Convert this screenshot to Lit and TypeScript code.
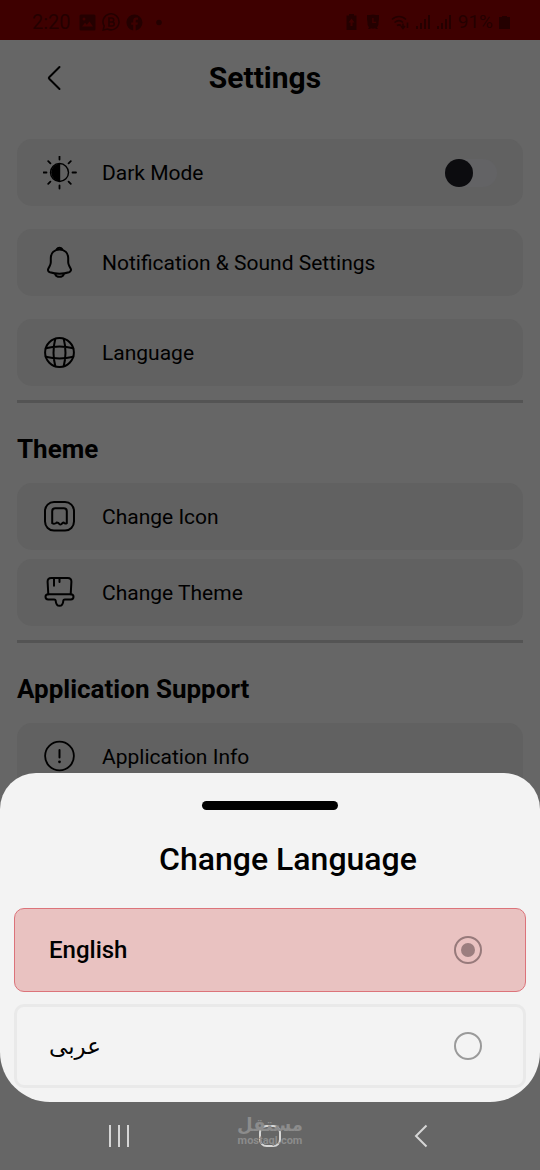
import { LitElement, html, css, svg, TemplateResult } from "lit";
import { customElement, state } from "lit/decorators.js";

type Language = { id: string; label: string };

const LANGUAGES: Language[] = [
  { id: "en", label: "English" },
  { id: "ar", label: "عربى" },
];

const icons: Record<string, TemplateResult> = {
  brightness: svg`
    <circle cx="16.500" cy="16.500" r="9" stroke-width="1.400"/>
    <path d="M17.200 7.500a9 9 0 1 0 0 18z" fill="currentColor" stroke="none"/>
    <path d="M16.500.5v3M16.500 29.500v3M.5 16.500h3M29.500 16.500h3.500M5.200 5.200l2.200 2.200M25.600 25.600l2.200 2.200M27.800 5.200l-2.200 2.200M7.400 25.600l-2.200 2.200" stroke-width="1.800"/>`,
  bell: svg`
    <path d="M16.500 3.400c-5.300 0-8.700 3.700-8.700 8.700v4.100c0 1.500-.5 2.700-1.200 4l-1.200 2.200c-.9 1.700-.2 3.300 1.600 3.900 6.200 1.900 12.800 1.900 19 0 1.800-.6 2.500-2.300 1.600-3.900l-1.200-2.200c-.7-1.300-1.200-2.500-1.200-4v-4.100c0-5-3.400-8.700-8.700-8.700z"/>
    <path d="M13.900 3c.5-.9 1.500-1.300 2.600-1.300s2.100.4 2.600 1.300M12.300 28.300c.6 1.600 2.200 2.500 4.200 2.500s3.600-.9 4.200-2.500"/>`,
  globe: svg`
    <circle cx="16.500" cy="16.500" r="14.400"/>
    <path d="M12.300 2.700c-2.300 9-2.300 18.600 0 27.600M20.700 2.700c2.300 9 2.300 18.600 0 27.600M2.700 12.300c9-2.300 18.600-2.300 27.600 0M2.700 20.700c9 2.300 18.600 2.300 27.600 0"/>`,
  appIcon: svg`
    <rect x="2" y="2" width="29" height="28.600" rx="9"/>
    <path d="M9.200 11.200c0-1.900 1.100-3 3-3h8.600c1.900 0 3 1.100 3 3v12c-1 .7-2.300.5-3-.7-1.200.1-1.600.5-1.900 1.300-.6.900-2 .9-2.700 0-.6-1-1.200-1.400-2.600-1.300-.8 1.200-2.900 1.600-4.400.7z"/>`,
  brush: svg`
    <path d="M5.300 18.200 4.600 5.800C4.500 3.300 5.800 2 8.200 2h16.600c2.400 0 3.700 1.300 3.600 3.800l-.7 12.400"/>
    <path d="M5.200 18.200h22.600c1.700 0 2.700 1.100 2.700 2.500s-1 2.700-2.700 2.700h-6c-.9 0-1.400.4-1.500 1.300-.2 3.400-1.500 5.100-3.800 5.100s-3.600-1.700-3.800-5.100c-.1-.9-.6-1.300-1.500-1.300h-6c-1.700 0-2.700-1.200-2.700-2.700s1-2.500 2.700-2.500z"/>
    <path d="M11 2.200v7.600M16.500 2.200v3.800"/>`,
  info: svg`
    <circle cx="16.500" cy="16" r="14.400" stroke-width="1.800"/>
    <path d="M16.500 10v7.500" stroke-width="2"/>
    <circle cx="16.500" cy="21.800" r="1.400" fill="currentColor" stroke="none"/>`,
};

@customElement("app-root")
export class AppRoot extends LitElement {
  static styles = css`
    :host {
      display: block;
      font-family: Roboto, "Noto Sans", sans-serif;
      color: #000;
    }
    * {
      box-sizing: border-box;
    }
    h1, h2, p {
      margin: 0;
    }
    button {
      font: inherit;
      color: inherit;
      border: 0;
      padding: 0;
      background: none;
      cursor: pointer;
    }
    .device {
      position: relative;
      display: flex;
      flex-direction: column;
      height: 100vh;
      overflow: hidden;
      background: #666;
    }
    .status {
      display: flex;
      justify-content: space-between;
      align-items: center;
      height: 40px;
      padding: 4px 30px 0 32px;
      background: #3e0000;
      color: #240000;
      font-size: 19px;
      line-height: 24px;
    }
    .status-group {
      display: flex;
      align-items: center;
      gap: 6px;
    }
    .clock {
      font-size: 20px;
      margin-right: 2px;
    }
    .status svg {
      display: block;
    }
    .page {
      position: relative;
      flex: 1;
      min-height: 0;
      overflow: hidden;
    }
    .header {
      display: grid;
      grid-template-columns: 40px 1fr 40px;
      align-items: center;
      height: 76px;
      padding: 0 34px;
    }
    .back {
      display: grid;
      place-items: center;
      height: 40px;
    }
    .title {
      text-align: center;
      font-size: 30px;
      line-height: 36px;
      font-weight: 700;
      padding-right: 10px;
    }
    .content {
      padding: 23px 17px 0;
    }
    .cards {
      display: flex;
      flex-direction: column;
      gap: 9px;
    }
    .cards.loose {
      gap: 23px;
    }
    .card {
      display: flex;
      align-items: center;
      gap: 25px;
      width: 100%;
      height: 67px;
      padding: 0 26px;
      border-radius: 15px;
      background: #616161;
      font-size: 21px;
      line-height: 28px;
      text-align: left;
    }
    .icon {
      flex: none;
      width: 34px;
      height: 34px;
      fill: none;
      stroke: currentColor;
      stroke-width: 2;
      stroke-linecap: round;
      stroke-linejoin: round;
    }
    .card-label {
      flex: 1;
    }
    .switch {
      appearance: none;
      margin: 0;
      width: 52px;
      height: 28px;
      border-radius: 14px;
      background: #636365;
      display: flex;
    }
    .switch::before {
      content: "";
      width: 28px;
      height: 28px;
      border-radius: 50%;
      background: #0c0c0f;
    }
    .switch:checked {
      justify-content: flex-end;
    }
    .divider {
      height: 3px;
      margin: 14px 0 28px;
      border: 0;
      background: #545454;
    }
    .section {
      font-size: 26px;
      line-height: 36px;
      font-weight: 700;
      margin-bottom: 16px;
    }
    .sheet {
      position: absolute;
      left: 0;
      right: 0;
      bottom: 0;
      padding: 28px 14px 14px;
      border-radius: 36px 36px 50px 50px;
      background: #f3f3f3;
    }
    .handle {
      width: 136px;
      height: 9px;
      margin: 0 auto;
      border-radius: 5px;
      background: #000;
    }
    .sheet-title {
      margin: 27px 0;
      padding-left: 36px;
      text-align: center;
      font-size: 32px;
      line-height: 44px;
      font-weight: 500;
    }
    .options {
      display: flex;
      flex-direction: column;
      gap: 12px;
      margin: 0;
      padding: 0;
      border: 0;
    }
    .option {
      display: flex;
      align-items: center;
      justify-content: space-between;
      height: 84px;
      padding: 0 41px 0 32px;
      border: 3px solid #e9e9e9;
      border-radius: 10px;
      font-size: 24px;
      line-height: 36px;
      font-weight: 500;
    }
    .option.selected {
      padding: 0 43px 0 34px;
      border: 1px solid #dc737a;
      background: #e9c2c1;
    }
    .radio {
      appearance: none;
      display: grid;
      place-items: center;
      width: 28px;
      height: 28px;
      margin: 0;
      border: 2px solid #9a9a9a;
      border-radius: 50%;
    }
    .radio:checked {
      border-color: #977a7b;
    }
    .radio:checked::before {
      content: "";
      width: 14px;
      height: 14px;
      border-radius: 50%;
      background: #9b7e7f;
    }
    .arabic {
      font-family: "DejaVu Sans", sans-serif;
      font-size: 23px;
    }
    .nav {
      position: relative;
      display: grid;
      grid-template-columns: 1fr 64px 1fr;
      align-items: center;
      height: 68px;
      padding: 0 87px;
    }
    .nav-button {
      display: grid;
      place-items: center;
      width: 64px;
      height: 48px;
    }
    .nav-button:last-of-type {
      justify-self: end;
    }
    .nav svg {
      fill: none;
      stroke: #d6d6d6;
      stroke-width: 2;
    }
    .watermark {
      position: absolute;
      inset: 12px 0 auto;
      text-align: center;
      color: #8c8c8c;
      font-weight: 700;
      pointer-events: none;
    }
    .mark-ar {
      font-family: "DejaVu Sans", sans-serif;
      font-size: 18px;
      line-height: 21px;
    }
    .mark-en {
      font-size: 11px;
      line-height: 12px;
    }
  `;

  @state() private language = "en";
  @state() private dark = false;

  private icon(name: string) {
    return html`<svg class="icon" viewBox="0 0 34 34" aria-hidden="true">${icons[name]}</svg>`;
  }

  private card(name: string, label: string) {
    return html`<button class="card">${this.icon(name)}<span class="card-label">${label}</span></button>`;
  }

  private signal() {
    return html`<svg width="15" height="16" viewBox="0 0 15 16" fill="currentColor" aria-hidden="true">
      <path d="M0 12h2v3H0zM4 9h2v6H4zM8 5h2v10H8zM12 1h2v14h-2z"/>
    </svg>`;
  }

  private status() {
    return html`<div class="status">
      <div class="status-group">
        <span class="clock">2:20</span>
        <svg width="17" height="17" viewBox="0 0 17 17" aria-hidden="true">
          <path fill="currentColor" fill-rule="evenodd" d="M2 .5h13a1.500 1.500 0 0 1 1.500 1.500v13a1.500 1.500 0 0 1-1.500 1.500H2A1.500 1.500 0 0 1 .5 15V2A1.500 1.500 0 0 1 2 .5zM3 12.500h11l-3.500-5-2.700 3.300-1.800-2zM5 3.500a1.500 1.500 0 1 0 0 3 1.500 1.500 0 0 0 0-3z"/>
        </svg>
        <svg width="18" height="18" viewBox="0 0 18 18" fill="none" stroke="currentColor" stroke-width="1.600" aria-hidden="true">
          <path d="M1.200 17l1-4A8 8 0 1 1 5.500 16z"/>
          <path d="M7 5h2.700a2 2 0 0 1 0 4H7zM7 9h3.200a2 2 0 0 1 0 4H7z"/>
        </svg>
        <svg width="17" height="17" viewBox="0 0 17 17" aria-hidden="true">
          <path fill="currentColor" d="M8.500.5a8 8 0 0 0-1.300 15.900v-5.600h-2V8.500h2V6.700c0-2 1.200-3.200 3-3.200.9 0 1.800.2 1.800.2v2h-1c-1 0-1.300.6-1.300 1.200v1.600h2.200l-.4 2.300H9.700v5.600A8 8 0 0 0 8.500.5z"/>
        </svg>
        <svg width="18" height="17" viewBox="0 0 18 17" aria-hidden="true"><circle cx="10" cy="8.500" r="2.800" fill="currentColor"/></svg>
      </div>
      <div class="status-group">
        <svg width="14" height="16" viewBox="0 0 14 16" aria-hidden="true">
          <path fill="currentColor" fill-rule="evenodd" d="M4 1.500V0h5v1.500h2.500V16h-10V1.500zM6.500 4.500l-3 4h2V12h2V8.500h2z"/>
        </svg>
        <svg width="20" height="16" viewBox="0 0 20 16" aria-hidden="true">
          <path fill="currentColor" fill-rule="evenodd" d="M2 1h3l3-.5L11 1h3v4l-.5 3.500q.5 3-1.500 5l1 1.500h-2l-1-.7a6 6 0 0 1-4 0L5 15H3l1-1.500q-2-2-1.500-5L2 5zM7.200 4v5h4V7.700H8.600V4z"/>
        </svg>
        <svg width="19" height="16" viewBox="0 0 19 16" fill="none" stroke="currentColor" stroke-width="1.600" aria-hidden="true">
          <path d="M1 5.500c4-4 10-4 14 0M3.500 8.500c3-2.500 6-2.500 8.500 0M6 11.500c1.500-1 2.500-1 4 0"/>
          <path d="M12 14V9.500m-2 2.500 2 2.500 2-2.500M16.500 14V8.500"/>
        </svg>
        ${this.signal()}${this.signal()}
        <span>91%</span>
        <svg width="11" height="13" viewBox="0 0 11 13" aria-hidden="true"><path fill="currentColor" d="M3 0h5v1h3v12H0V1h3z"/></svg>
      </div>
    </div>`;
  }

  private option(lang: Language) {
    const selected = lang.id === this.language;
    return html`<label class="option ${selected ? "selected" : ""}">
      <span class=${lang.id === "ar" ? "arabic" : ""} lang=${lang.id}>${lang.label}</span>
      <input class="radio" type="radio" name="language" .value=${lang.id} .checked=${selected}
        @change=${() => (this.language = lang.id)}>
    </label>`;
  }

  render() {
    return html`<div class="device">
      ${this.status()}
      <main class="page">
        <header class="header">
          <button class="back" aria-label="Back">
            <svg width="16" height="28" viewBox="0 0 16 28" fill="none" stroke="currentColor" stroke-width="2" stroke-linecap="round" stroke-linejoin="round" aria-hidden="true">
              <path d="M13.500 3 3.200 13.200q-.8.800 0 1.600L13.500 25"/>
            </svg>
          </button>
          <h1 class="title">Settings</h1>
        </header>
        <div class="content">
          <div class="cards loose">
            <label class="card">
              ${this.icon("brightness")}
              <span class="card-label">Dark Mode</span>
              <input class="switch" type="checkbox" role="switch" .checked=${this.dark}
                @change=${() => (this.dark = !this.dark)}>
            </label>
            ${this.card("bell", "Notification & Sound Settings")}
            ${this.card("globe", "Language")}
          </div>
          <hr class="divider">
          <h2 class="section">Theme</h2>
          <div class="cards">
            ${this.card("appIcon", "Change Icon")}
            ${this.card("brush", "Change Theme")}
          </div>
          <hr class="divider">
          <h2 class="section">Application Support</h2>
          <div class="cards">${this.card("info", "Application Info")}</div>
        </div>
        <section class="sheet" role="dialog" aria-labelledby="sheet-title">
          <div class="handle"></div>
          <h2 class="sheet-title" id="sheet-title">Change Language</h2>
          <fieldset class="options" aria-labelledby="sheet-title">${LANGUAGES.map((l) => this.option(l))}</fieldset>
        </section>
      </main>
      <nav class="nav">
        <div class="watermark">
          <p class="mark-ar" lang="ar">مستقل</p>
          <p class="mark-en">mostaql.com</p>
        </div>
        <button class="nav-button" aria-label="Recents">
          <svg width="22" height="22" viewBox="0 0 22 22" aria-hidden="true"><path d="M2 0v22M11 0v22M20 0v22"/></svg>
        </button>
        <button class="nav-button" aria-label="Home">
          <svg width="24" height="24" viewBox="0 0 24 24" aria-hidden="true"><rect x="2" y="2" width="20" height="20" rx="6.500"/></svg>
        </button>
        <button class="nav-button" aria-label="Back">
          <svg width="14" height="24" viewBox="0 0 14 24" aria-hidden="true"><path d="M12.500 1.500 2 12l10.500 10.500"/></svg>
        </button>
      </nav>
    </div>`;
  }
}
